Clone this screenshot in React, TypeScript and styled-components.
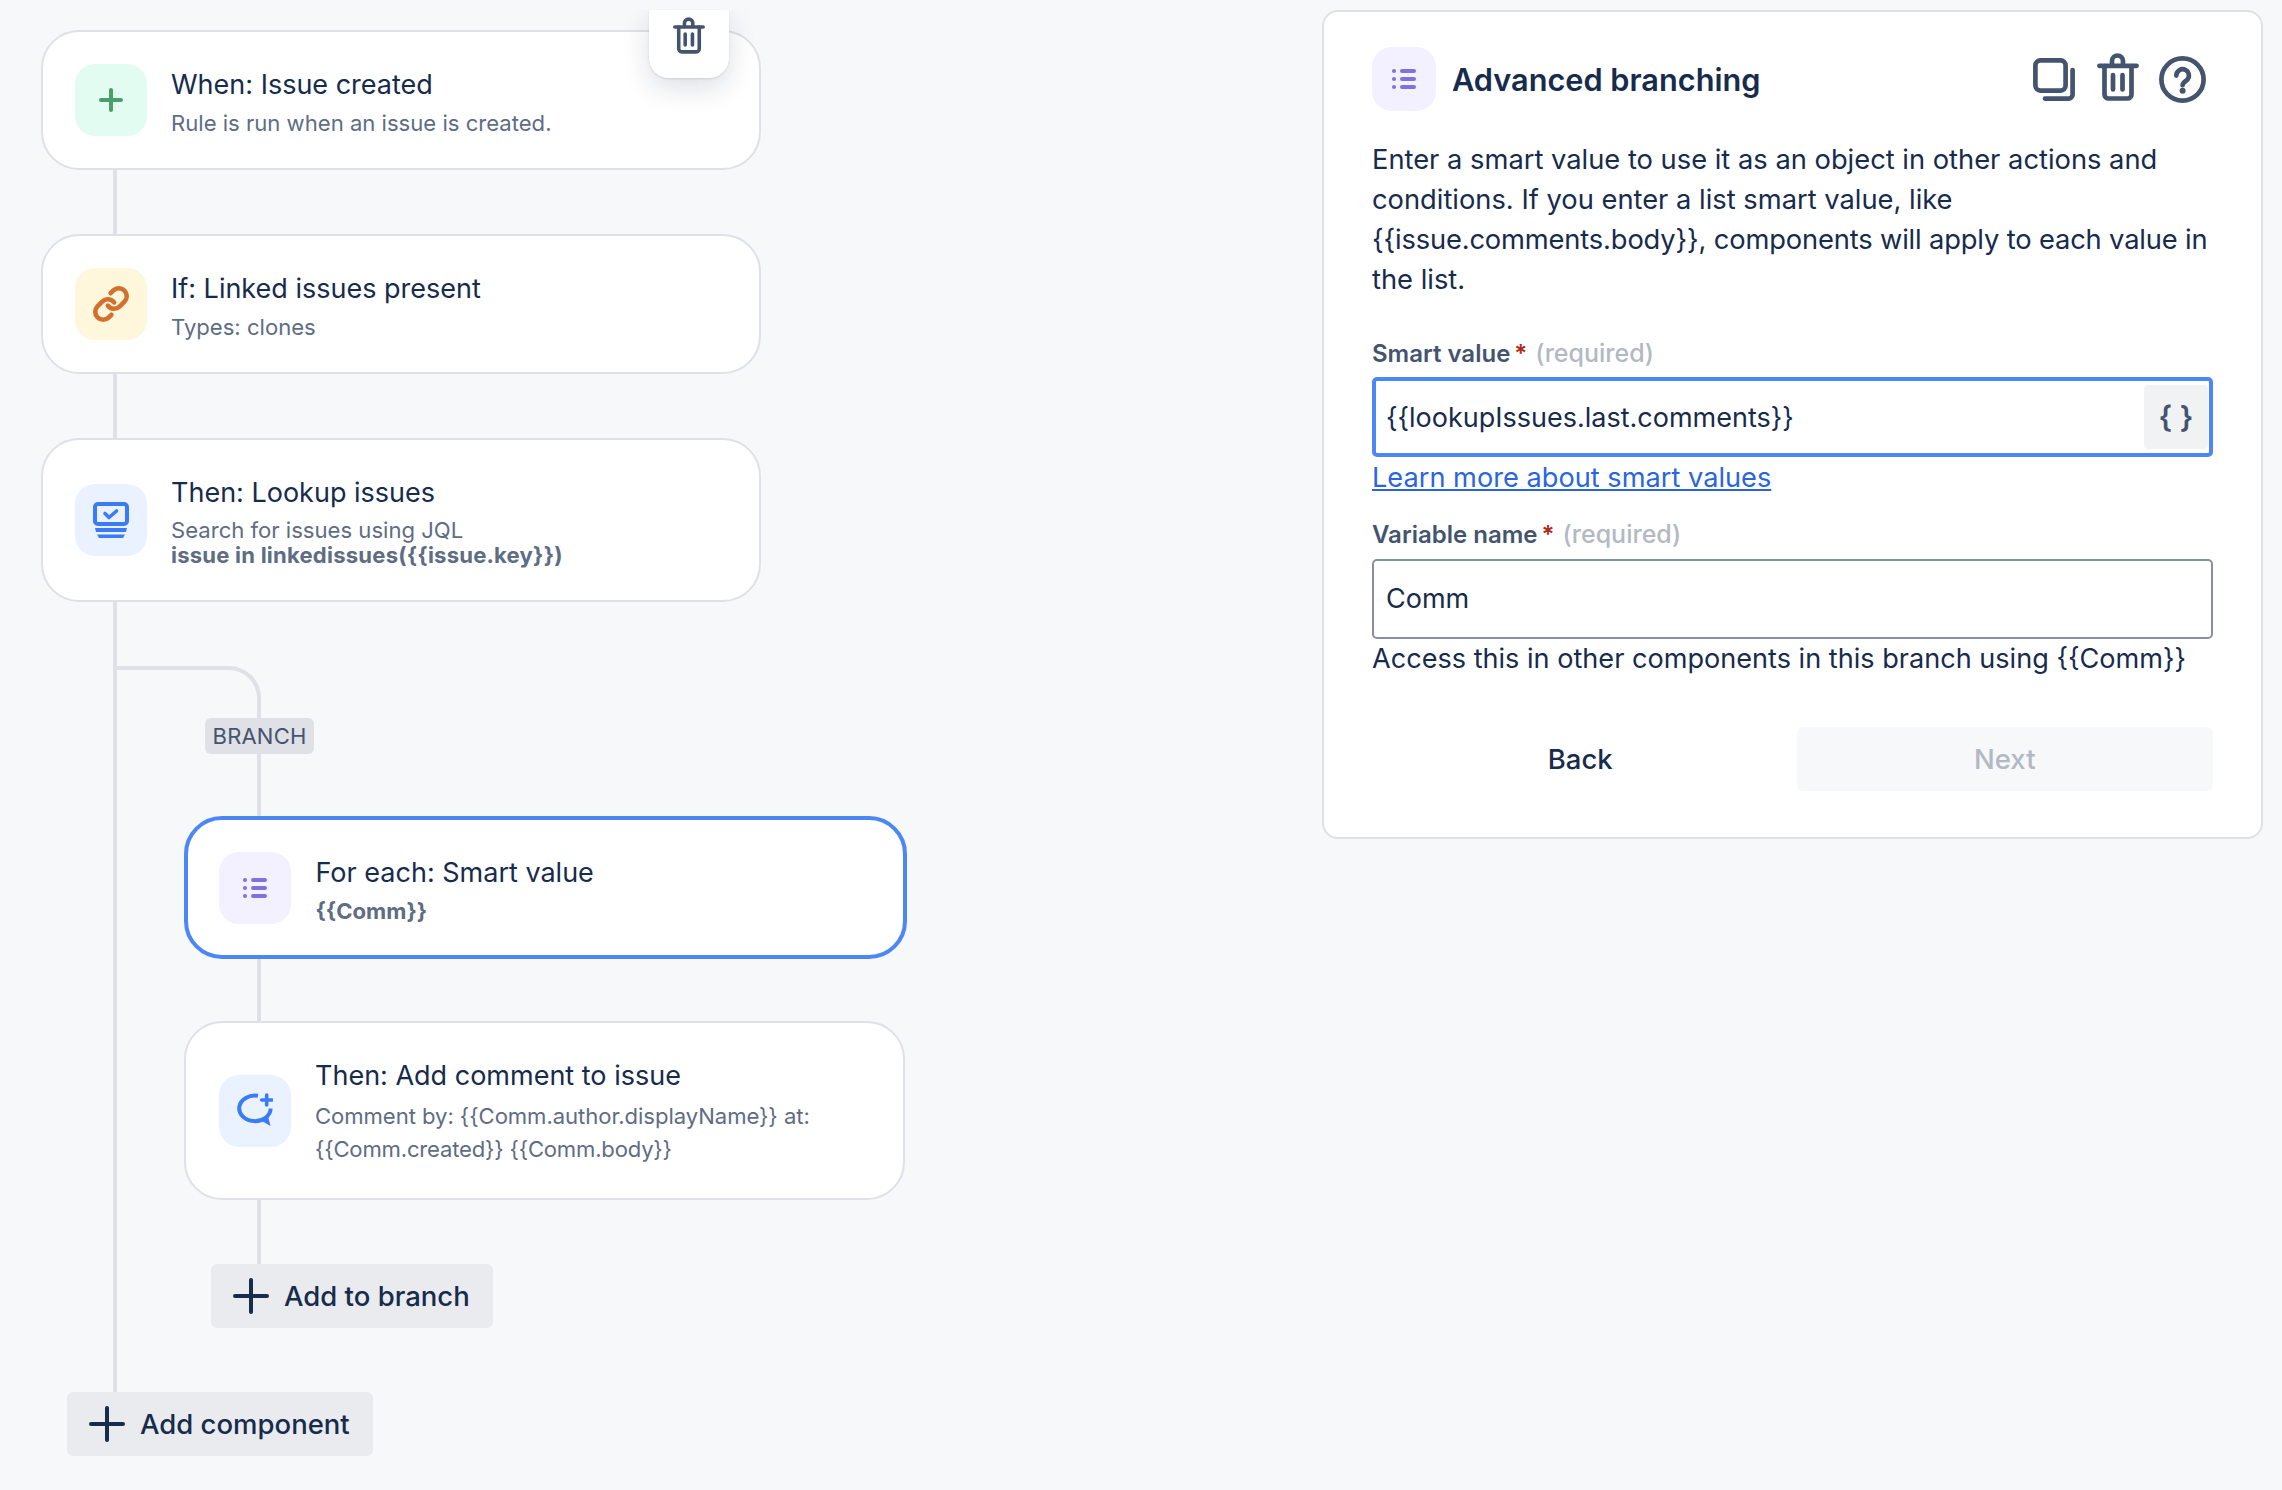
import React from "react";
import styled, { createGlobalStyle } from "styled-components";

/** ===========================================================================
 * Colours
 * ============================================================================
 */

const C = {
  page: "#f7f8fa",
  line: "#dfe1e6",
  ink: "#172b4d",
  sub: "#5e6c84",
  slate: "#44546f",
  muted: "#b3b9c4",
  blue: "#4c87f6",
  link: "#2a65e0",
  green: "#4a9d6d",
  orange: "#d4702e",
  purple: "#8270db",
  iconBlue: "#3b7bf6",
};

const GlobalStyle = createGlobalStyle`
  html, body {
    margin: 0;
    background: ${C.page};
  }
  body {
    font-family: Inter, "Noto Sans", sans-serif;
    color: ${C.ink};
  }
`;

/** ===========================================================================
 * Icons
 * ============================================================================
 */

const PlusIcon = (props: { size: number; color: string; weight: number }) => {
  const { size, color, weight } = props;
  const inset = weight / 2;
  const mid = size / 2;
  return (
    <svg width={size} height={size} viewBox={`0 0 ${size} ${size}`} fill="none">
      <path
        d={`M${mid} ${inset}V${size - inset}M${inset} ${mid}H${size - inset}`}
        stroke={color}
        strokeWidth={weight}
        strokeLinecap="round"
      />
    </svg>
  );
};

const LinkIcon = () => (
  <svg width="38" height="38" viewBox="0 0 24 24" fill="none">
    <g stroke={C.orange} strokeWidth="2.9" strokeLinecap="round">
      <path d="M10 13a5 5 0 0 0 7.54.54l3-3a5 5 0 0 0-7.07-7.07l-1.72 1.71" />
      <path d="M14 11a5 5 0 0 0-7.54-.54l-3 3a5 5 0 0 0 7.07 7.07l1.71-1.71" />
    </g>
  </svg>
);

const LookupIcon = () => (
  <svg width="36" height="36" viewBox="0 0 36 36" fill="none">
    <rect x="2" y="2" width="32" height="20" rx="3" stroke={C.iconBlue} strokeWidth="4" />
    <path
      d="M12 11.5l4 4 7.5-6.5"
      stroke={C.iconBlue}
      strokeWidth="3.6"
      strokeLinecap="round"
      strokeLinejoin="round"
    />
    <path d="M2 26h32l-1 4H3z" fill={C.iconBlue} />
    <path d="M4 32.5h28l-2 3.5H6z" fill={C.iconBlue} />
  </svg>
);

const CommentIcon = () => (
  <svg width="36" height="36" viewBox="0 0 36 36" fill="none">
    <path
      d="M21 2.8A15.7 12.8 0 1 0 33.6 15.5"
      stroke={C.iconBlue}
      strokeWidth="4"
      strokeLinecap="butt"
    />
    <path d="M24 27.5l9.5 5.5-2.5-10z" fill={C.iconBlue} />
    <path
      d="M29.7 2V12M24.7 7H34.7"
      stroke={C.iconBlue}
      strokeWidth="3.6"
      strokeLinecap="round"
    />
  </svg>
);

const ListIcon = () => (
  <svg width="24" height="20" viewBox="0 0 24 20" fill="none">
    <circle cx="2" cy="2" r="2" fill={C.purple} />
    <circle cx="2" cy="10" r="2" fill={C.purple} />
    <circle cx="2" cy="18" r="2" fill={C.purple} />
    <path
      d="M10 2H22M10 10H22M10 18H22"
      stroke={C.purple}
      strokeWidth="4"
      strokeLinecap="round"
    />
  </svg>
);

const TrashIcon = (props: { width: number; height: number }) => (
  <svg width={props.width} height={props.height} viewBox="0 0 42 48" fill="none">
    <g stroke={C.slate} strokeWidth="4.7" strokeLinecap="round" strokeLinejoin="round">
      <path d="M2.4 12.8H39.6" />
      <path d="M15 12V8a5.5 5.5 0 0 1 11 0v4" />
      <path d="M7.5 13V41.5a4 4 0 0 0 4 4H30.5a4 4 0 0 0 4-4V13" />
      <path d="M16 22V36.5M25.5 22V36.5" />
    </g>
  </svg>
);

const CopyIcon = () => (
  <svg width="42" height="43" viewBox="0 0 42 43" fill="none">
    <g stroke={C.slate} strokeWidth="4.7" strokeLinecap="round" strokeLinejoin="round">
      <rect x="2.4" y="2.4" width="30.2" height="30.2" rx="5" />
      <path d="M39.6 12V36.6a4 4 0 0 1-4 4H12" />
    </g>
  </svg>
);

const HelpIcon = () => (
  <svg width="47" height="47" viewBox="0 0 47 47" fill="none">
    <circle cx="23.5" cy="23.5" r="21.1" stroke={C.slate} strokeWidth="4.7" />
    <path
      d="M17.3 19.6a6.3 6.3 0 1 1 9.8 5.2c-2.2 1.5-3.5 2.4-3.5 4.4"
      stroke={C.slate}
      strokeWidth="4.7"
      strokeLinecap="round"
    />
    <circle cx="23.6" cy="34.8" r="3" fill={C.slate} />
  </svg>
);

/** ===========================================================================
 * Rule card
 * ============================================================================
 */

const RuleCard = (props: {
  tone: string;
  icon: React.ReactNode;
  title: string;
  height: number;
  selected?: boolean;
  indent?: number;
  textOffset?: number;
  titleGap?: number;
  children: React.ReactNode;
  overlay?: React.ReactNode;
}) => (
  <Card $height={props.height} $selected={props.selected} $indent={props.indent ?? 0}>
    <IconTile $size={72} $tone={props.tone}>
      {props.icon}
    </IconTile>
    <CardText $offset={props.textOffset ?? 8}>
      <CardTitle $gap={props.titleGap ?? 4}>{props.title}</CardTitle>
      {props.children}
    </CardText>
    {props.overlay}
  </Card>
);

/** ===========================================================================
 * App
 * ============================================================================
 */

const App: React.FC = () => {
  return (
    <Page>
      <GlobalStyle />
      <Canvas>
        <RuleCard
          tone="#e3fcf1"
          icon={<PlusIcon size={24} color={C.green} weight={4} />}
          title="When: Issue created"
          height={140}
          overlay={
            <FloatingDelete>
              <TrashIcon width={32} height={37} />
            </FloatingDelete>
          }
        >
          <CardSub>Rule is run when an issue is created.</CardSub>
        </RuleCard>
        <Connector $height={64} $indent={72} />
        <RuleCard tone="#fff7dc" icon={<LinkIcon />} title="If: Linked issues present" height={140}>
          <CardSub>Types: clones</CardSub>
        </RuleCard>
        <Connector $height={64} $indent={72} />
        <RuleCard
          tone="#ebf2ff"
          icon={<LookupIcon />}
          title="Then: Lookup issues"
          height={164}
          textOffset={3}
          titleGap={8}
        >
          <CardSub $tight>Search for issues using JQL</CardSub>
          <CardSub $tight $bold $track={0.2}>
            issue in linkedissues({"{{"}issue.key{"}}"})
          </CardSub>
        </RuleCard>

        <BranchArea>
          <Trunk />
          <BranchColumn>
            <Elbow />
            <BranchTag>BRANCH</BranchTag>
            <Connector $height={62} $indent={140} />
            <RuleCard
              tone="#f3f0ff"
              icon={<ListIcon />}
              title="For each: Smart value"
              height={143}
              selected
              indent={67}
            >
              <CardSub $bold>{"{{Comm}}"}</CardSub>
            </RuleCard>
            <Connector $height={62} $indent={140} />
            <RuleCard
              tone="#ebf2ff"
              icon={<CommentIcon />}
              title="Then: Add comment to issue"
              height={179}
              indent={67}
              textOffset={3}
              titleGap={7}
            >
              <CardSub $loose $track={-0.06}>
                Comment by: {"{{Comm.author.displayName}}"} at:
              </CardSub>
              <CardSub $loose $track={-0.2}>
                {"{{Comm.created}} {{Comm.body}}"}
              </CardSub>
            </RuleCard>
            <Connector $height={64} $indent={140} />
            <AddButton $indent={94}>
              <PlusIcon size={36} color={C.ink} weight={4} />
              Add to branch
            </AddButton>
          </BranchColumn>
        </BranchArea>

        <AddButton $indent={26}>
          <PlusIcon size={36} color={C.ink} weight={4} />
          Add component
        </AddButton>
      </Canvas>

      <Panel>
        <PanelHeader>
          <IconTile $size={64} $tone="#f3f0ff">
            <ListIcon />
          </IconTile>
          <PanelTitle>Advanced branching</PanelTitle>
          <PanelActions>
            <CopyIcon />
            <RaisedAction>
              <TrashIcon width={42} height={48} />
            </RaisedAction>
            <HelpIcon />
          </PanelActions>
        </PanelHeader>

        <Description>
          Enter a smart value to use it as an object in other actions and
          <br />
          conditions. If you enter a list smart value, like
          <br />
          <TightLine>{"{{issue.comments.body}}"}, components will apply to each value in</TightLine>
          <br />
          the list.
        </Description>

        <FieldLabel $first>
          Smart value<Star>*</Star>
          <Required>(required)</Required>
        </FieldLabel>
        <Field $focused>
          <FieldValue>{"{{lookupIssues.last.comments}}"}</FieldValue>
          <SmartButton>{"{ }"}</SmartButton>
        </Field>
        <LearnLink href="#">Learn more about smart values</LearnLink>

        <FieldLabel>
          Variable name<Star>*</Star>
          <Required>(required)</Required>
        </FieldLabel>
        <Field>
          <FieldValue>Comm</FieldValue>
        </Field>
        <HelperText>Access this in other components in this branch using {"{{Comm}}"}</HelperText>

        <PanelButtons>
          <NavButton>Back</NavButton>
          <NavButton $disabled>Next</NavButton>
        </PanelButtons>
      </Panel>
    </Page>
  );
};

/** ===========================================================================
 * Styled Components
 * ============================================================================
 */

const Page = styled.div`
  display: flex;
  align-items: flex-start;
  width: 2282px;
  height: 1490px;
  overflow: hidden;
  background: ${C.page};
`;

const Canvas = styled.div`
  display: flex;
  flex-direction: column;
  align-items: flex-start;
  flex: 0 0 1322px;
  box-sizing: border-box;
  padding: 30px 0 0 41px;
`;

const Card = styled.div<{ $height: number; $selected?: boolean; $indent: number }>`
  position: relative;
  display: flex;
  align-items: center;
  gap: 24.5px;
  box-sizing: border-box;
  width: ${(p) => (p.$indent ? (p.$selected ? 723 : 721) : 720)}px;
  height: ${(p) => p.$height}px;
  margin-left: ${(p) => p.$indent}px;
  padding-left: ${(p) => (p.$selected ? 31 : p.$indent ? 32.5 : 31.5)}px;
  background: #fff;
  border: ${(p) => (p.$selected ? `4px solid ${C.blue}` : `2.5px solid ${C.line}`)};
  border-radius: 38px;
`;

const IconTile = styled.div<{ $size: number; $tone: string }>`
  display: flex;
  align-items: center;
  justify-content: center;
  flex: none;
  width: ${(p) => p.$size}px;
  height: ${(p) => p.$size}px;
  background: ${(p) => p.$tone};
  border-radius: 20px;
`;

const CardText = styled.div<{ $offset: number }>`
  display: flex;
  flex-direction: column;
  padding-top: ${(p) => p.$offset}px;
`;

const CardTitle = styled.div<{ $gap: number }>`
  font-size: 27px;
  line-height: 34px;
  margin-bottom: ${(p) => p.$gap}px;
  color: ${C.ink};
`;

const CardSub = styled.div<{
  $bold?: boolean;
  $tight?: boolean;
  $loose?: boolean;
  $track?: number;
}>`
  font-size: 22.1px;
  line-height: ${(p) => (p.$tight ? 25 : p.$loose ? 33 : 34)}px;
  font-weight: ${(p) => (p.$bold ? 700 : 400)};
  letter-spacing: ${(p) => p.$track ?? 0}px;
  color: ${C.sub};
`;

const FloatingDelete = styled.div`
  position: absolute;
  top: -22.5px;
  right: 30.5px;
  display: flex;
  align-items: flex-start;
  justify-content: center;
  box-sizing: border-box;
  width: 80px;
  height: 68px;
  padding-top: 7px;
  background: #fff;
  border-radius: 0 0 20px 20px;
  box-shadow: 0 10px 28px rgba(9, 30, 66, 0.14), 0 1px 2px rgba(9, 30, 66, 0.12);
  clip-path: inset(0 -60px -60px -60px);
`;

const Connector = styled.div<{ $height: number; $indent: number }>`
  flex: none;
  width: 4px;
  height: ${(p) => p.$height}px;
  margin-left: ${(p) => p.$indent}px;
  background: ${C.line};
`;

const BranchArea = styled.div`
  display: flex;
  margin-left: 72px;
`;

const Trunk = styled.div`
  flex: none;
  width: 4px;
  background: ${C.line};
`;

const BranchColumn = styled.div`
  display: flex;
  flex-direction: column;
  align-items: flex-start;
  padding: 64px 0 64px 0;
`;

const Elbow = styled.div`
  box-sizing: border-box;
  width: 144px;
  height: 52px;
  border-top: 4px solid ${C.line};
  border-right: 4px solid ${C.line};
  border-top-right-radius: 32px;
`;

const BranchTag = styled.div`
  display: flex;
  align-items: center;
  justify-content: center;
  width: 109px;
  height: 36px;
  margin-left: 88px;
  background: #dfe1e6;
  border-radius: 6px;
  font-size: 22px;
  letter-spacing: 0.2px;
  color: ${C.slate};
`;

const AddButton = styled.div<{ $indent: number }>`
  display: flex;
  align-items: center;
  gap: 15px;
  box-sizing: border-box;
  height: 64px;
  margin-left: ${(p) => p.$indent}px;
  padding: 0 23px 0 22px;
  background: #e9ebee;
  border-radius: 6px;
  font-size: 27.5px;
  font-weight: 500;
  color: ${C.ink};
`;

const Panel = styled.div`
  flex: none;
  box-sizing: border-box;
  width: 941px;
  height: 829px;
  margin-top: 10px;
  padding: 35px 48px 0;
  background: #fff;
  border: 2.5px solid ${C.line};
  border-radius: 16px;
`;

const PanelHeader = styled.div`
  display: flex;
  align-items: center;
  height: 64px;
`;

const PanelTitle = styled.div`
  margin-left: 16px;
  font-size: 30.7px;
  font-weight: 600;
  color: ${C.ink};
`;

const PanelActions = styled.div`
  display: flex;
  align-items: center;
  gap: 20px;
  margin-left: auto;
  margin-right: 7.5px;
`;

const RaisedAction = styled.div`
  display: flex;
  margin-top: -5px;
  margin-left: 2px;
`;

const Description = styled.p`
  margin: 29px 0 0;
  font-size: 27.3px;
  line-height: 40px;
  white-space: nowrap;
  color: ${C.ink};
`;

const TightLine = styled.span`
  letter-spacing: -0.15px;
`;

const FieldLabel = styled.div<{ $first?: boolean }>`
  margin-top: ${(p) => (p.$first ? 37 : 23.5)}px;
  margin-bottom: ${(p) => (p.$first ? 7 : 8)}px;
  font-size: 24px;
  line-height: 32px;
  font-weight: 600;
  color: ${C.slate};
`;

const Star = styled.span`
  margin-left: 4px;
  color: #ae2a19;
`;

const Required = styled.span`
  margin-left: 8px;
  font-size: 25px;
  font-weight: 500;
  color: ${C.muted};
`;

const Field = styled.div<{ $focused?: boolean }>`
  display: flex;
  align-items: center;
  justify-content: space-between;
  box-sizing: border-box;
  height: 80px;
  padding: 0 1px 0 ${(p) => (p.$focused ? 10 : 12)}px;
  background: #fff;
  border: ${(p) => (p.$focused ? `4px solid ${C.blue}` : "2px solid #8590a2")};
  border-radius: 5px;
`;

const FieldValue = styled.span`
  font-size: 27px;
  color: ${C.ink};
`;

const SmartButton = styled.div`
  display: flex;
  align-items: center;
  justify-content: center;
  width: 64px;
  height: 64px;
  background: #f1f2f4;
  border-radius: 4px;
  font-size: 30px;
  font-weight: 600;
  color: ${C.slate};
`;

const LearnLink = styled.a`
  display: block;
  margin-top: 5px;
  font-size: 27.2px;
  line-height: 32px;
  color: ${C.link};
  text-decoration: underline;
`;

const HelperText = styled.div`
  margin-top: 4px;
  font-size: 27.1px;
  line-height: 32px;
  color: ${C.ink};
`;

const PanelButtons = styled.div`
  display: grid;
  grid-template-columns: 1fr 1fr;
  gap: 8px;
  margin-top: 52px;
`;

const NavButton = styled.div<{ $disabled?: boolean }>`
  display: flex;
  align-items: center;
  justify-content: center;
  height: 64px;
  border-radius: 6px;
  font-size: 27.5px;
  font-weight: 500;
  color: ${(p) => (p.$disabled ? C.muted : C.ink)};
  background: ${(p) => (p.$disabled ? C.page : "transparent")};
`;

/** ===========================================================================
 * Export
 * ============================================================================
 */

export default App;
